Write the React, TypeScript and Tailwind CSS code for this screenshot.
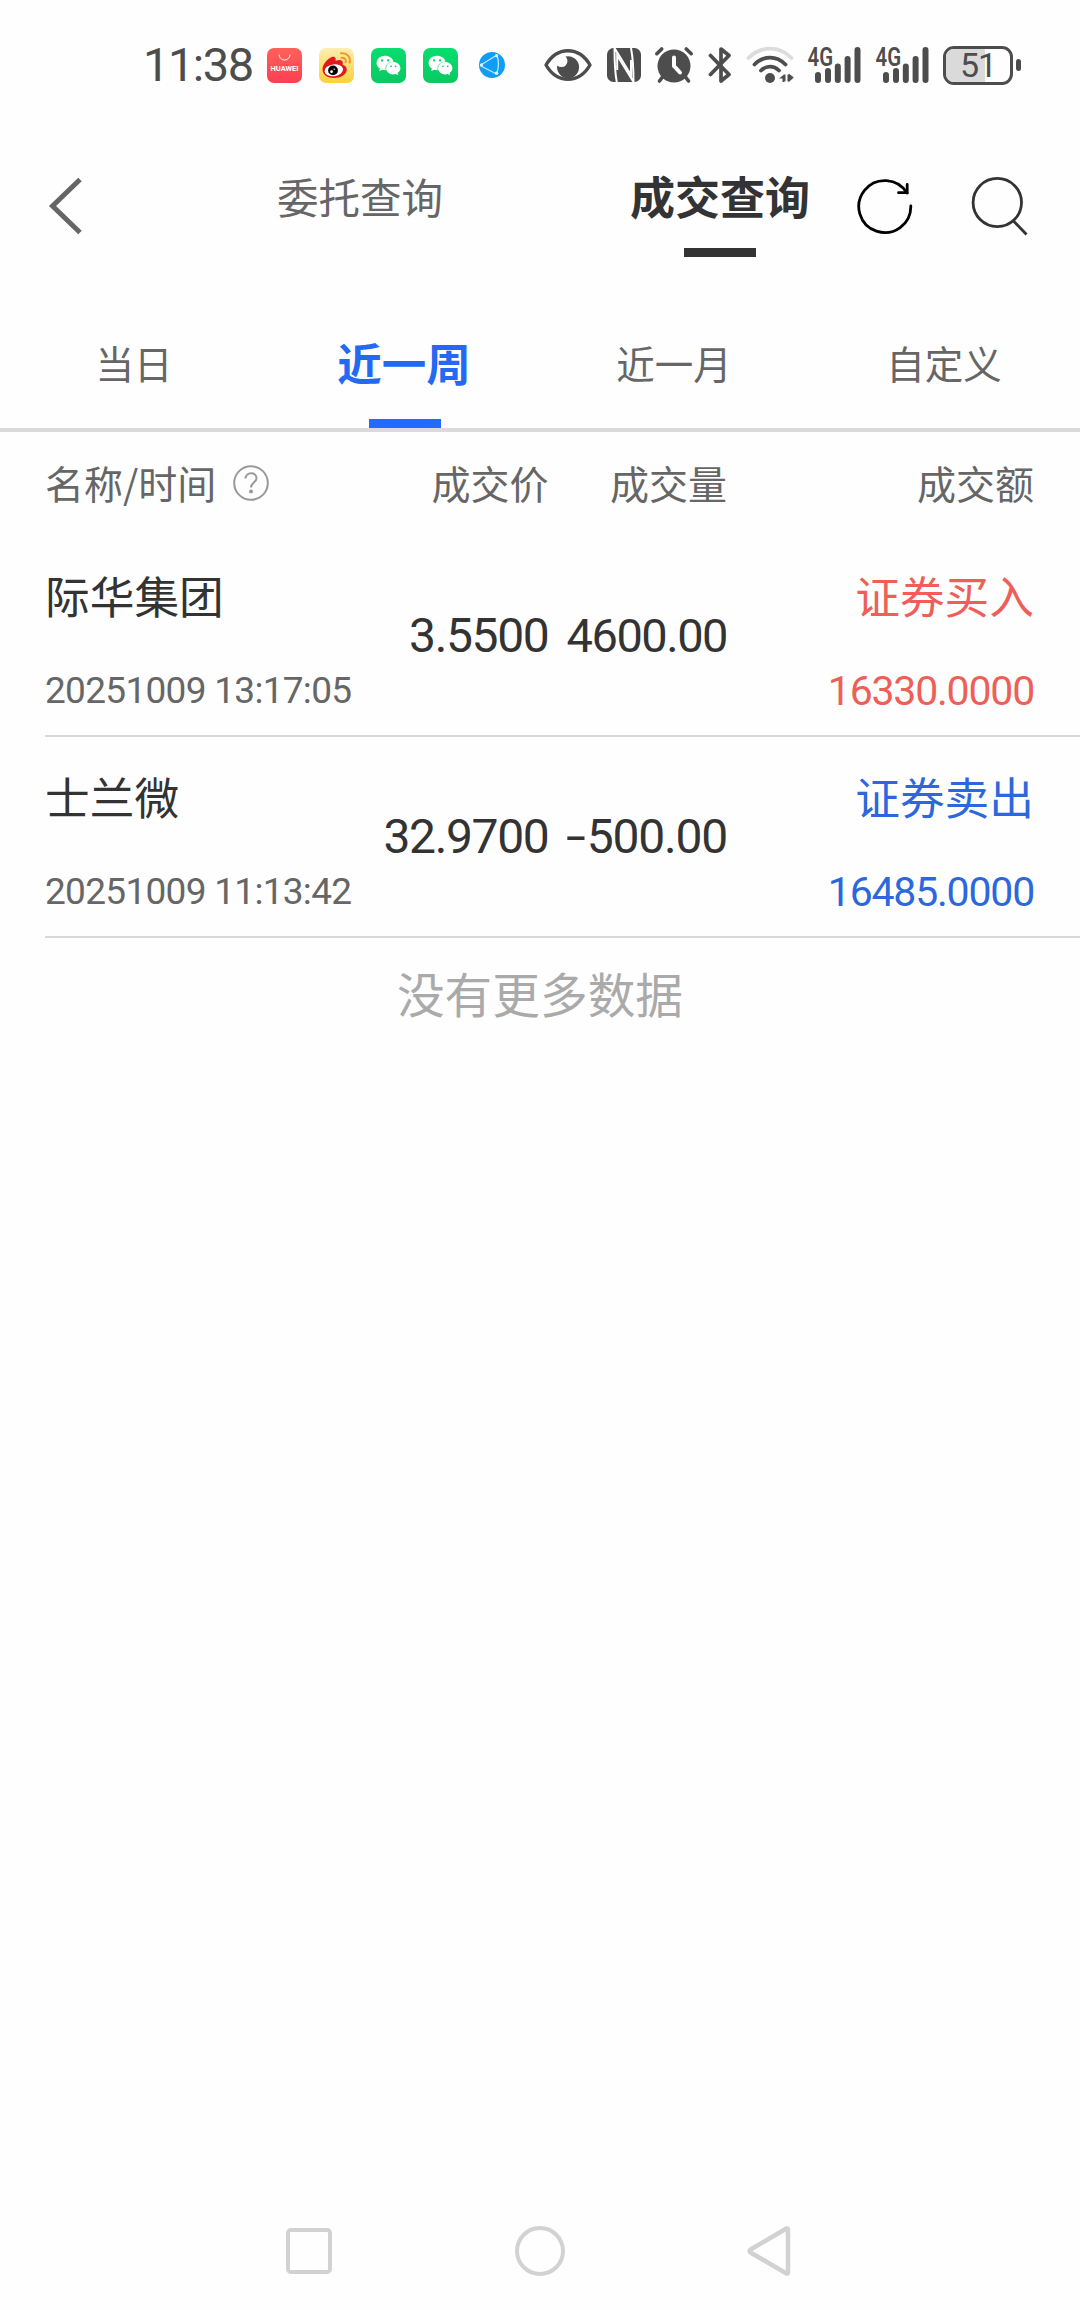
import { FaWeixin } from "react-icons/fa";
import clsx from "clsx";

type Trade = {
    name: string;
    time: string;
    price: string;
    volume: string;
    side: "buy" | "sell";
    amount: string;
};

const TRADES: Trade[] = [
    { name: "际华集团", time: "20251009 13:17:05", price: "3.5500", volume: "4600.00", side: "buy", amount: "16330.0000" },
    { name: "士兰微", time: "20251009 11:13:42", price: "32.9700", volume: "-500.00", side: "sell", amount: "16485.0000" },
];

const RANGES = ["当日", "近一周", "近一月", "自定义"];

// --- Status bar icons ---

function HuaweiIcon() {
    return (
        <svg className="w-[35px] h-[35px] shrink-0" viewBox="0 0 35 35">
            <defs>
                <linearGradient id="hw" x1="0" y1="0" x2="0" y2="1">
                    <stop offset="0" stopColor="#ff6159" />
                    <stop offset="1" stopColor="#fb3f52" />
                </linearGradient>
            </defs>
            <rect width="35" height="35" rx="7" fill="url(#hw)" />
            <path d="M12 6.500a5.500 5.500 0 0 0 11 0" fill="none" stroke="#fff" strokeWidth="1" />
            <text x="17.500" y="23" textAnchor="middle" textLength="28" lengthAdjust="spacingAndGlyphs" fontSize="7.200" fontWeight="700" fill="#fff" fontFamily="Roboto, sans-serif">HUAWEI</text>
        </svg>
    );
}

function WeiboIcon() {
    return (
        <svg className="w-[35px] h-[35px] shrink-0" viewBox="0 0 35 35">
            <defs>
                <linearGradient id="wb" x1="0" y1="0" x2="0" y2="1">
                    <stop offset="0" stopColor="#fdeeb0" />
                    <stop offset="1" stopColor="#ffd03c" />
                </linearGradient>
            </defs>
            <rect width="35" height="35" rx="7" fill="url(#wb)" />
            <path d="M3.500 22C3 17 8 11 12.500 9.200c3.500-1.200 4.700.8 4 3.600 3.500-1.500 7.500-1.400 7.300 2.200 0 .9-.3 1.500-.2 1.800 3.500 1.200 4.600 3.400 4.100 6C26.500 27.500 21 30 15 30 8.500 30 4 27 3.500 22z" fill="#e1181c" />
            <ellipse cx="14.800" cy="22.300" rx="9.300" ry="5.900" transform="rotate(-8 14.800 22.300)" fill="#fff" />
            <circle cx="14" cy="22.400" r="4.900" fill="#000" />
            <circle cx="12.600" cy="23.700" r="1.400" fill="#fff" />
            <circle cx="15.200" cy="21.300" r=".7" fill="#fff" />
            <path d="M22 5.300c6-.8 10 3.700 8.600 9.400M22.500 9.700c3.200-.3 4.900 1.700 4.200 4.600" fill="none" stroke="#f0982c" strokeWidth="2" strokeLinecap="round" />
        </svg>
    );
}

function WechatIcon() {
    return (
        <div className="flex items-center justify-center w-[35px] h-[35px] shrink-0 rounded-[7px] bg-gradient-to-b from-[#06de6e] to-[#0bc863]">
            <FaWeixin className="w-[25px] h-[25px] text-white" />
        </div>
    );
}

function BrowserIcon() {
    return (
        <svg className="w-[26px] h-[26px] shrink-0" viewBox="0 0 26 26">
            <circle cx="13" cy="13" r="13" fill="#0f9df5" />
            <path d="M1 13.500L18 3M1 13.500L17.500 22M17.500 2q4 10 0 20" fill="none" stroke="#bfe6ff" strokeWidth="1.300" />
            <circle cx="2.500" cy="12.800" r="1.600" fill="#d8f0ff" />
            <circle cx="17.500" cy="3.700" r="1.600" fill="#d8f0ff" />
            <circle cx="17.500" cy="21.200" r="1.800" fill="#d8f0ff" />
        </svg>
    );
}

function EyeIcon() {
    return (
        <svg className="w-[48px] h-[34px] shrink-0" viewBox="0 0 48 34">
            <path d="M2 17C7.500 7.500 15 2.700 24 2.700S40.500 7.500 46 17C40.500 26.500 33 31.300 24 31.300S7.500 26.500 2 17z" fill="none" stroke="#4d4d4d" strokeWidth="3.400" strokeLinejoin="round" />
            <path d="M21.500 8.500A11 11 0 1 1 13.200 17.500A5.600 5.600 0 1 0 21.500 8.500z" fill="#4d4d4d" />
        </svg>
    );
}

function NfcIcon() {
    return (
        <svg className="w-[34px] h-[34px] shrink-0" viewBox="0 0 34 34">
            <rect width="34" height="34" rx="6.500" fill="#4d4d4d" />
            <path d="M7.500 0C7.500 10 7.800 24 9.800 34M7.500 0L24 27V12" fill="none" stroke="#fff" strokeWidth="2" />
            <path d="M26.500 34L10.200 7.500V22M26.500 34C26.500 24 26 10 24 0" fill="none" stroke="#fff" strokeWidth="2" />
        </svg>
    );
}

function AlarmIcon() {
    return (
        <svg className="w-[40px] h-[38px] shrink-0" viewBox="0 0 40 38" fill="none" stroke="#4d4d4d" strokeWidth="3.600" strokeLinecap="round">
            <circle cx="20" cy="20" r="16.500" fill="#4d4d4d" stroke="none" />
            <path d="M2.800 7.700L7.700 3M37.200 7.700L32.300 3M8.500 31L5.500 35M31.500 31L34.500 35" />
            <path d="M20 11.500V20l6 6.500" stroke="#fff" strokeWidth="4" />
        </svg>
    );
}

function BluetoothIcon() {
    return (
        <svg className="w-[24px] h-[38px] shrink-0" viewBox="0 0 24 38">
            <path d="M2.500 9.500L21 28.500 13 35V3l8 6.500L2.500 28.500" fill="none" stroke="#4d4d4d" strokeWidth="3.700" strokeLinecap="round" strokeLinejoin="round" />
        </svg>
    );
}

function WifiIcon() {
    return (
        <svg className="w-[48px] h-[38px] shrink-0" viewBox="0 0 48 38" fill="none" strokeLinecap="round">
            <path d="M2.500 12C14.500-.5 33.500-.5 45.500 12" stroke="#dcdcdc" strokeWidth="3.800" />
            <path d="M8.500 18.500C17.500 9.300 30.500 9.300 39.500 18.500" stroke="#4d4d4d" strokeWidth="3.800" />
            <path d="M15 24.500C20.300 19.300 27.700 19.300 33 24.500" stroke="#4d4d4d" strokeWidth="3.800" />
            <circle cx="24" cy="32" r="5" fill="#4d4d4d" />
            {/* up/down traffic arrows */}
            <path d="M33 32.500l5-4v7.500h-1.500v-3.500zM47.800 31.500l-5 4.500V27.500z" fill="#4d4d4d" />
            <path d="M38.700 28.500v7M42.300 28.500v7" stroke="#4d4d4d" strokeWidth="1.600" strokeLinecap="butt" />
        </svg>
    );
}

function SignalIcon() {
    return (
        <svg className="w-[55px] h-[38px] shrink-0 overflow-visible" viewBox="0 0 55 38">
            <text x="0.500" y="20" textLength="25.500" lengthAdjust="spacingAndGlyphs" fontSize="25" fontWeight="600" fill="#4d4d4d" fontFamily="Roboto, sans-serif">4G</text>
            <g stroke="#4d4d4d" strokeWidth="6" strokeLinecap="round">
                <path d="M11 29v5M21 25v9M30.800 20.500V34M40.600 13v21M50.500 4v30" />
            </g>
        </svg>
    );
}

function BatteryIcon() {
    return (
        <div className="flex items-center gap-[3px] shrink-0">
            <div className="relative w-[70px] h-[39px] rounded-[11px] border-[3px] border-[#4d4d4d] overflow-hidden flex items-center justify-center">
                <div className="absolute left-0 inset-y-0 bg-[#dadada]" style={{ width: "61%" }} />
                <span className="relative font-['Roboto',sans-serif] text-[34px] leading-[34px] tracking-[-1px] text-[#4d4d4d]">51</span>
            </div>
            <div className="w-[5px] h-[12px] rounded-full bg-[#4d4d4d]" />
        </div>
    );
}

function StatusBar() {
    return (
        <div className="h-[130px] flex items-center pl-[143px]">
            <span className="w-[124px] font-['Roboto',sans-serif] text-[47px] tracking-[-1.500px] text-[#4d4d4d]">11:38</span>
            <div className="flex items-center gap-[17px]">
                <HuaweiIcon />
                <WeiboIcon />
                <WechatIcon />
                <WechatIcon />
            </div>
            <div className="flex items-center pl-[21px]">
                <BrowserIcon />
            </div>
            <div className="flex items-center pl-[39px]">
                <EyeIcon />
                <div className="w-[15px]" />
                <NfcIcon />
                <div className="w-[13px]" />
                <AlarmIcon />
                <div className="w-[14px]" />
                <BluetoothIcon />
                <div className="w-[14px]" />
                <WifiIcon />
            </div>
            <div className="flex items-center gap-[13px] pl-[13px]">
                <SignalIcon />
                <SignalIcon />
                <BatteryIcon />
            </div>
        </div>
    );
}

// --- Page header: back, the two query tabs, refresh and search ---

function Header() {
    return (
        <div className="h-[190px] flex">
            <div className="w-[180px] pt-[45px] pl-[47px]">
                <svg className="w-[38px] h-[62px]" viewBox="0 0 38 62">
                    <path d="M33 4.500L5.500 31L33 57.500" fill="none" stroke="#666" strokeWidth="5" />
                </svg>
            </div>
            <div className="w-[360px] pt-[34px] text-center text-[41.500px] leading-[64px] text-[#666]">委托查询</div>
            <div className="w-[360px] pt-[34px] flex flex-col items-center">
                <span className="text-[45px] leading-[64px] font-bold text-[#333]">成交查询</span>
                <div className="mt-5 w-[72px] h-[9px] bg-[#333]" />
            </div>
            {/* icons overlap the right side of the active tab's cell */}
            <div className="flex pt-[45px] -ml-[44px] gap-[54px]">
                <svg className="w-[58px] h-[62px]" viewBox="856 175 58 62" fill="none" stroke="#000" strokeWidth="2.800" strokeLinecap="round">
                    <path d="M910.800 206A26 26 0 1 1 907 193" />
                    <path d="M907.200 184.500V192.700H898.500" />
                </svg>
                <svg className="w-[62px] h-[62px]" viewBox="968 175 62 62" fill="none" stroke="#333" strokeWidth="2.800">
                    <circle cx="997.300" cy="202.500" r="24.200" />
                    <path d="M1013.500 221L1026.500 234.500" />
                </svg>
            </div>
        </div>
    );
}

function RangeTabs({ active }: { active: number }) {
    return (
        <div className="grid grid-cols-4 h-[112px] border-b-4 border-[#dadada]">
            {RANGES.map((label, i) => (
                <div key={label} className="flex flex-col items-center pt-[10px]">
                    <span className={clsx("pr-[2px] leading-[64px]", i === active ? "text-[44.500px] font-bold text-[#2469f2]" : "text-[38.500px] text-[#666]")}>
                        {label}
                    </span>
                    {i === active && <div className="mt-[25px] w-[72px] h-[9px] bg-[#216bff]" />}
                </div>
            ))}
        </div>
    );
}

function TradeRow({ trade }: { trade: Trade }) {
    const buy = trade.side === "buy";
    const negative = trade.volume.startsWith("-");
    return (
        <div className="ml-[45px] h-[201px] border-b-2 border-[#d8d8d8] grid grid-cols-[328.500px_175px_179.500px_306px]">
            <div className="pt-[29px] whitespace-nowrap">
                <div className="text-[44.700px] leading-[60px] text-[#333]">{trade.name}</div>
                <div className="mt-[36px] font-['Roboto',sans-serif] text-[37px] leading-[60px] tracking-[-0.700px] text-[#666]">{trade.time}</div>
            </div>
            <div className="self-center pt-px text-right font-['Roboto',sans-serif] text-[48px] leading-[60px] tracking-[-1.350px] text-[#333]">{trade.price}</div>
            <div className={clsx("self-center pt-px pr-px text-right font-['Roboto',sans-serif] leading-[60px] text-[#333]", negative ? "text-[48px] tracking-[-1.200px]" : "text-[47px] tracking-[-1.500px]")}>
                {negative && <span className="inline-block origin-right scale-x-150 mr-[3px]">-</span>}
                {trade.volume.replace("-", "")}
            </div>
            <div className={clsx("pt-[29px] text-right", buy ? "text-[#ee5f58]" : "text-[#2c68dc]")}>
                <div className="text-[44.700px] leading-[60px]">{buy ? "证券买入" : "证券卖出"}</div>
                <div className="mt-[36px] font-['Roboto',sans-serif] text-[41px] leading-[60px] tracking-[-1.200px]">{trade.amount}</div>
            </div>
        </div>
    );
}

function NavBar() {
    return (
        <div className="mt-auto h-[118px] flex items-center pl-[286px]">
            <div className="w-[46px] h-[46px] rounded-[5px] border-[4.500px] border-[#d2d2d2]" />
            <div className="ml-[183px] w-[50px] h-[50px] rounded-full border-[4.500px] border-[#d2d2d2]" />
            <svg className="ml-[182px] w-[44px] h-[52px]" viewBox="0 0 44 52">
                <path d="M39.500 3.500Q41 3 41 5V47Q41 49 39.500 48.500L3.500 27.500Q1.500 26 3.500 24.500z" fill="none" stroke="#d2d2d2" strokeWidth="4.500" strokeLinejoin="round" />
            </svg>
        </div>
    );
}

export default function App() {
    return (
        <div className="w-[1080px] h-[2310px] overflow-hidden flex flex-col bg-[#fefefe] font-['Noto_Sans_CJK_SC',sans-serif]">
            <StatusBar />
            <Header />
            <RangeTabs active={1} />

            {/* Column titles */}
            <div className="ml-[45px] h-[104px] pb-[3px] grid grid-cols-[328.500px_175px_179.500px_306px] items-center text-[39px] text-[#666]">
                <div className="flex items-center">
                    <span>名称/时间</span>
                    <svg className="ml-[17px] w-[36px] h-[38px]" viewBox="0 0 36 38" fill="none" stroke="#999" strokeWidth="2">
                        <circle cx="18" cy="19" r="16.800" />
                        <path d="M12.500 14.500C13 7.500 23.500 7.500 23.500 14.200C23.500 18 18 18.500 18 23.500" />
                        <circle cx="18" cy="27.500" r="1" fill="#999" />
                    </svg>
                </div>
                <div className="text-right">成交价</div>
                <div className="pr-px text-right">成交量</div>
                <div className="text-right">成交额</div>
            </div>

            {TRADES.map((t) => (
                <TradeRow key={t.time} trade={t} />
            ))}

            <div className="text-center text-[47.700px] leading-[110px] text-[#aaa]">没有更多数据</div>

            <NavBar />
        </div>
    );
}
